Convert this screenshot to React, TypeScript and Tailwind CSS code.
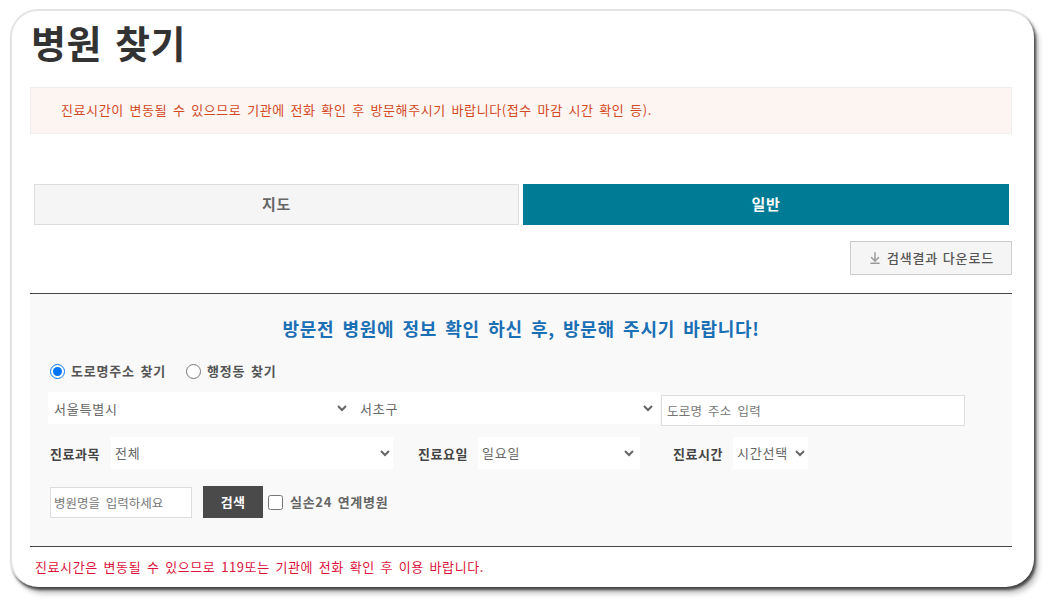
import React from "react";
import { ArrowDownToLine } from "lucide-react";

const font = { fontFamily: '"Noto Sans CJK KR", "Liberation Sans", sans-serif' };

export default function App() {
  return (
    <div style={font} className="w-[1050px] h-[604px] bg-white pt-[9px] pl-[10px] overflow-hidden">
      <div className="w-[1024px] h-[578px] bg-white rounded-[28px] border-t-[2px] border-l-[2px] border-[#e4e4e4] shadow-[2px_3px_3px_#444,5px_7px_5px_#ccc] pl-[18px] flex flex-col">
        {/* Title */}
        <h1 className="text-[38px] leading-[52px] font-bold text-[#333] h-[76px] pt-[5px] pl-[1px] tracking-[0.5px] [word-spacing:4px]">병원 찾기</h1>

        {/* Notice */}
        <div className="w-[982px] h-[47px] bg-[#fdf5f2] border border-[#eeeeee] flex items-center pl-[30px] pb-[2px] text-[13px] text-[#d4491f] tracking-[0.6px] [word-spacing:2.2px]">
          진료시간이 변동될 수 있으므로 기관에 전화 확인 후 방문해주시기 바랍니다(접수 마감 시간 확인 등).
        </div>

        {/* Tabs */}
        <div className="w-[982px] mt-[50px] pl-[4px] pr-[3px] flex gap-[4px]">
          <div className="w-[485px] h-[41px] bg-[#f5f5f5] border border-[#dddddd] flex items-center justify-center text-[15px] font-bold text-[#666] tracking-[0.8px]">지도</div>
          <div className="w-[486px] h-[41px] bg-[#007b96] flex items-center justify-center text-[15px] font-bold text-white tracking-[0.8px]">일반</div>
        </div>

        <div className="w-[982px] mt-[16px] flex justify-end">
          <button className="w-[162px] h-[34px] bg-[#f5f5f5] border border-[#cccccc] flex items-center justify-center gap-[5px] text-[13px] font-medium text-[#555] tracking-[0.8px] [word-spacing:1px]">
            <ArrowDownToLine size={14} strokeWidth={2.5} className="text-[#999]" />
            검색결과 다운로드
          </button>
        </div>

        {/* Search panel */}
        <div className="w-[982px] h-[254px] mt-[18px] bg-[#f9f9f9] border-t border-b border-[#444] flex flex-col pl-[20px]">
          <h2 className="w-[942px] mt-[21px] text-center text-[18px] leading-[26px] font-bold text-[#1a6fb5] tracking-[0.7px] [word-spacing:3.5px]">
            방문전 병원에 정보 확인 하신 후, 방문해 주시기 바랍니다!
          </h2>

          <div className="mt-[18px] h-[24px] flex items-center text-[13px] font-bold text-[#555] tracking-[0.8px] [word-spacing:2px]">
            <label className="flex items-center gap-[6px]">
              <input type="radio" name="addr" defaultChecked className="w-[15px] h-[15px] m-0" />
              도로명주소 찾기
            </label>
            <label className="flex items-center gap-[6px] ml-[20px]">
              <input type="radio" name="addr" className="w-[15px] h-[15px] m-0" />
              행정동 찾기
            </label>
          </div>

          <div className="mt-[9px] flex items-start -ml-[2px]">
            <select defaultValue="서울특별시" className="w-[306px] h-[32px] bg-white pl-[2px] border-r-4 border-white text-[13px] tracking-[0.8px] text-[#666] outline-none">
              <option>서울특별시</option>
            </select>
            <select defaultValue="서초구" className="w-[306px] h-[32px] bg-white pl-[2px] border-r-4 border-white text-[13px] tracking-[0.8px] text-[#666] outline-none">
              <option>서초구</option>
            </select>
            <input placeholder="도로명 주소 입력" className="w-[304px] h-[31px] ml-[1px] mt-[3px] bg-white border border-[#dddddd] px-[5px] text-[12.5px] tracking-[0.2px] [word-spacing:3px] placeholder:text-[#777] outline-none" />
          </div>

          <div className="mt-[11px] flex items-center text-[13px] text-[#666]">
            <span className="w-[61px] font-bold text-[#444] pt-[2px] tracking-[0.5px]">진료과목</span>
            <select defaultValue="전체" className="w-[282px] h-[32px] bg-white tracking-[0.8px] pb-[2px] outline-none">
              <option>전체</option>
            </select>
            <span className="ml-[25px] w-[60px] font-bold text-[#444] pt-[2px] tracking-[0.5px]">진료요일</span>
            <select defaultValue="일요일" className="w-[162px] h-[32px] bg-white border-r-[3px] border-white tracking-[0.8px] pb-[2px] outline-none">
              <option>일요일</option>
            </select>
            <span className="ml-[33px] w-[60px] font-bold text-[#444] pt-[2px] tracking-[0.5px]">진료시간</span>
            <select defaultValue="시간선택" className="w-[75px] h-[32px] bg-white tracking-[0.8px] pb-[2px] outline-none">
              <option>시간선택</option>
            </select>
          </div>

          <div className="mt-[17px] flex items-center">
            <input placeholder="병원명을 입력하세요" className="w-[142px] h-[31px] bg-white border border-[#dddddd] px-[3px] text-[12.5px] [word-spacing:3px] placeholder:text-[#777] outline-none" />
            <button className="w-[60px] h-[32px] ml-[11px] bg-[#4a4a4a] text-white text-[13px] font-bold tracking-[0.4px]">검색</button>
            <label className="flex items-center gap-[7px] ml-[5px] text-[13px] font-bold text-[#666] tracking-[0.7px] [word-spacing:2px]">
              <input type="checkbox" className="w-[15px] h-[15px] m-0" />
              실손24 연계병원
            </label>
          </div>
        </div>

        <p className="mt-[11px] pl-[5px] text-[13px] leading-[18px] text-[#dc143c] tracking-[0.6px] [word-spacing:2.2px]">
          진료시간은 변동될 수 있으므로 119또는 기관에 전화 확인 후 이용 바랍니다.
        </p>
      </div>
    </div>
  );
}
